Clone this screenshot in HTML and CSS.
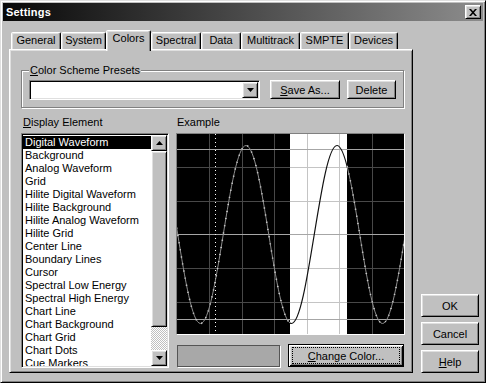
FILE: index.html
```html
<!DOCTYPE html>
<html lang="en">
<head>
    <meta charset="UTF-8">
    <title>Settings</title>
    <link rel="stylesheet" href="styles.css">
</head>
<body>
    <div class="window">
        <div class="titlebar">
            <span class="title">Settings</span>
            <button class="btn close-btn" aria-label="Close">
                <svg width="8" height="7" viewBox="0 0 8 7"><path d="M0 0h2l2 2.3L6 0h2L5 3.5 8 7H6L4 4.7 2 7H0l3-3.5z" fill="#000"/></svg>
            </button>
        </div>

        <div class="client">
            <div class="tab-area">
                <div class="tabs">
                    <div class="tab tab-general">General</div>
                    <div class="tab tab-system">System</div>
                    <div class="tab tab-colors active">Colors</div>
                    <div class="tab tab-spectral">Spectral</div>
                    <div class="tab tab-data">Data</div>
                    <div class="tab tab-multitrack">Multitrack</div>
                    <div class="tab tab-smpte">SMPTE</div>
                    <div class="tab tab-devices">Devices</div>
                </div>

                <div class="panel">
                    <fieldset class="presets">
                        <legend><u>C</u>olor Scheme Presets</legend>
                        <div class="preset-row">
                            <div class="combo">
                                <span class="btn combo-arrow">
                                    <svg width="7" height="4" viewBox="0 0 7 4"><path d="M0 0h7L3.5 4z" fill="#000"/></svg>
                                </span>
                            </div>
                            <button class="btn save-btn"><u>S</u>ave As...</button>
                            <button class="btn delete-btn">Delete</button>
                        </div>
                    </fieldset>

                    <div class="columns">
                        <div class="list-col">
                            <div class="field-label"><u>D</u>isplay Element</div>
                            <div class="listbox">
                                <ul class="items">
                                    <li class="selected">Digital Waveform</li>
                                    <li>Background</li>
                                    <li>Analog Waveform</li>
                                    <li>Grid</li>
                                    <li>Hilite Digital Waveform</li>
                                    <li>Hilite Background</li>
                                    <li>Hilite Analog Waveform</li>
                                    <li>Hilite Grid</li>
                                    <li>Center Line</li>
                                    <li>Boundary Lines</li>
                                    <li>Cursor</li>
                                    <li>Spectral Low Energy</li>
                                    <li>Spectral High Energy</li>
                                    <li>Chart Line</li>
                                    <li>Chart Background</li>
                                    <li>Chart Grid</li>
                                    <li>Chart Dots</li>
                                    <li>Cue Markers</li>
                                </ul>
                                <div class="scrollbar">
                                    <span class="btn sb-btn">
                                        <svg width="7" height="4" viewBox="0 0 7 4"><path d="M3.5 0L7 4H0z" fill="#000"/></svg>
                                    </span>
                                    <span class="btn sb-thumb"></span>
                                    <span class="sb-track"></span>
                                    <span class="btn sb-btn">
                                        <svg width="7" height="4" viewBox="0 0 7 4"><path d="M0 0h7L3.5 4z" fill="#000"/></svg>
                                    </span>
                                </div>
                            </div>
                        </div>

                        <div class="example-col">
                            <div class="field-label example-label">Example</div>
                            <div class="example">
                                <svg width="227" height="200" viewBox="0 0 227 200">
                                    <defs>
                                        <clipPath id="hilite"><rect x="113" y="0" width="57" height="200"/></clipPath>
                                        <clipPath id="normal">
                                            <rect x="0" y="0" width="113" height="200"/>
                                            <rect x="170" y="0" width="57" height="200"/>
                                        </clipPath>
                                        <path id="grid" d="M32.5 0V200M65.5 0V200M97.5 0V200M130.5 0V200M162.5 0V200M195.5 0V200M0 33.5H227M0 67.5H227M0 134.5H227M0 168.5H227"/>
                                        <path id="curve" d="M-22 11.5C-5.47 11.5 6.97 189.5 23.5 189.5S52.47 11.5 69 11.5S97.97 189.5 114.5 189.5S143.47 11.5 160 11.5S188.97 189.5 205.5 189.5S234.47 11.5 251 11.5"/>
                                    </defs>
                                    <rect width="227" height="200" fill="#000"/>
                                    <rect x="113" width="57" height="200" fill="#fff"/>
                                    <!-- grid: dark on black, light on hilite -->
                                    <use href="#grid" stroke="#484848" clip-path="url(#normal)"/>
                                    <use href="#grid" stroke="#c4c4c4" clip-path="url(#hilite)"/>
                                    <!-- boundary + center lines -->
                                    <path d="M0 15.5H227M0 100.5H227M0 185.5H227" stroke="#a6a6a6"/>
                                    <!-- cursor -->
                                    <path d="M38.5 0V200" stroke="#fff" stroke-dasharray="1 3"/>
                                    <!-- waveform -->
                                    <g clip-path="url(#normal)" fill="none">
                                        <use href="#curve" stroke="#8c8c8c"/>
                                        <use href="#curve" stroke="#c8c8c8" stroke-width="1.6" stroke-dasharray="1.2 6"/>
                                    </g>
                                    <g clip-path="url(#hilite)" fill="none">
                                        <use href="#curve" stroke="#111" stroke-width="1.2"/>
                                    </g>
                                </svg>
                            </div>
                            <div class="color-row">
                                <div class="swatch"></div>
                                <button class="btn default change-btn"><span class="focus"><u>C</u>hange Color...</span></button>
                            </div>
                        </div>
                    </div>
                </div>
            </div>

            <div class="actions">
                <button class="btn">OK</button>
                <button class="btn">Cancel</button>
                <button class="btn"><u>H</u>elp</button>
            </div>
        </div>
    </div>
</body>
</html>
```

FILE: styles.css
```css
body {
    margin: 0;
    background: #c0c0c0;
    color: #000;
    font-family: 'Liberation Sans', Arial, sans-serif;
    font-size: 11px;
}
.window {
    box-sizing: border-box;
    width: 486px;
    height: 383px;
    padding: 2px;
    background: #c0c0c0;
    border: 1px solid;
    border-color: #dfdfdf #000 #000 #dfdfdf;
    box-shadow: inset 1px 1px #fff, inset -1px -1px #808080;
}
.titlebar {
    display: flex;
    align-items: center;
    justify-content: space-between;
    height: 18px;
    padding: 0 2px 0 3px;
    background: linear-gradient(to right, #080808, #8c8c8c);
}
.title {
    color: #fff;
    font-weight: bold;
    font-size: 11px;
    letter-spacing: 0.2px;
}

/* win98 style bevel button */
.btn {
    box-sizing: border-box;
    display: flex;
    align-items: center;
    justify-content: center;
    padding: 0;
    margin: 0;
    font: 11px 'Liberation Sans', Arial, sans-serif;
    color: #000;
    background: #c0c0c0;
    border: 1px solid;
    border-color: #fff #000 #000 #fff;
    box-shadow: inset 1px 1px #dfdfdf, inset -1px -1px #808080;
}
.btn u, .field-label u, legend u {
    text-underline-offset: 1px;
}
.close-btn {
    width: 16px;
    height: 14px;
}

.client {
    display: flex;
    padding: 9px 0 0 6px;
}
.tab-area {
    width: 404px;
}
.tabs {
    display: flex;
    align-items: flex-end;
    height: 19px;
    padding-left: 2px;
}
.tab {
    box-sizing: border-box;
    height: 17px;
    line-height: 15px;
    text-align: center;
    border: 1px solid;
    border-bottom: 0;
    border-color: #fff #000 transparent #fff;
    border-radius: 2px 2px 0 0;
    box-shadow: inset -1px 0 #808080, inset 1px 1px #dfdfdf;
    background: #c0c0c0;
}
.tab.active {
    position: relative;
    z-index: 1;
    height: 21px;
    margin-bottom: -2px;
}
.tab-general { width: 50px; }
.tab-system { width: 45px; }
.tab-colors { width: 45px; }
.tab-spectral { width: 50px; }
.tab-data { width: 40px; }
.tab-multitrack { width: 59px; }
.tab-smpte { width: 49px; }
.tab-devices { width: 49px; }

.panel {
    box-sizing: border-box;
    width: 404px;
    height: 324px;
    padding: 14px 7px 0 11px;
    border: 1px solid;
    border-color: #fff #000 #000 #fff;
    box-shadow: inset 1px 1px #dfdfdf, inset -1px -1px #808080;
}

.presets {
    box-sizing: border-box;
    width: 383px;
    min-inline-size: 0;
    margin: 0;
    padding: 3px 7px 7px;
    border: 1px solid #808080;
    box-shadow: inset 1px 1px #fff, 1px 1px #fff;
}
.presets legend {
    padding: 0 1px;
    margin-left: 0;
    line-height: 13px;
    background: #c0c0c0;
}
.preset-row {
    display: flex;
    align-items: flex-start;
}
.combo {
    box-sizing: border-box;
    display: flex;
    justify-content: flex-end;
    width: 231px;
    height: 20px;
    padding: 1px;
    margin-right: 10px;
    background: #fff;
    border: 1px solid;
    border-color: #808080 #fff #fff #808080;
    box-shadow: inset 1px 1px #000, inset -1px -1px #dfdfdf;
}
.combo-arrow {
    width: 16px;
    height: 16px;
}
.save-btn {
    width: 70px;
    height: 19px;
    margin-right: 7px;
}
.delete-btn {
    width: 49px;
    height: 19px;
}

.columns {
    display: flex;
    margin-top: 8px;
}
.list-col {
    width: 148px;
}
.example-col {
    width: 229px;
    margin-left: 7px;
}
.field-label {
    line-height: 13px;
    padding-left: 2px;
    margin-bottom: 4px;
}
.example-label {
    padding-left: 1px;
}

.listbox {
    box-sizing: border-box;
    display: flex;
    height: 235px;
    padding: 1px;
    background: #fff;
    border: 1px solid;
    border-color: #808080 #fff #fff #808080;
    box-shadow: inset 1px 1px #000, inset -1px -1px #dfdfdf;
}
.items {
    flex: 1;
    overflow: hidden;
    list-style: none;
    margin: 0;
    padding: 1px 0 0;
}
.items li {
    height: 13px;
    line-height: 13px;
    padding-left: 2px;
    white-space: nowrap;
}
.items li.selected {
    background: #000;
    color: #fff;
}
.scrollbar {
    display: flex;
    flex-direction: column;
    width: 16px;
}
.sb-btn {
    width: 16px;
    height: 16px;
    flex: none;
}
.sb-thumb {
    height: 176px;
    flex: none;
}
.sb-track {
    flex: 1;
    background: repeating-conic-gradient(#fff 0 25%, #c0c0c0 0 50%) 0 0 / 2px 2px;
}

.example {
    box-sizing: border-box;
    height: 202px;
    background: #000;
    border: 1px solid;
    border-color: #808080 #fff #fff #808080;
}
.example svg {
    display: block;
}
.color-row {
    display: flex;
    margin-top: 9px;
}
.swatch {
    box-sizing: border-box;
    width: 103px;
    height: 22px;
    margin: 1px 0 0 1px;
    background: #a8a8a8;
    border: 1px solid #555;
    box-shadow: 1px 1px #fff;
}
.change-btn {
    width: 116px;
    height: 23px;
    margin-left: 8px;
}
.btn.default {
    padding: 2px 3px;
    border-color: #000;
    box-shadow: inset 1px 1px #fff, inset -1px -1px #000, inset 2px 2px #dfdfdf, inset -2px -2px #808080;
}
.focus {
    flex: 1;
    align-self: stretch;
    display: flex;
    align-items: center;
    justify-content: center;
    border: 1px dotted #000;
}

.actions {
    display: flex;
    flex-direction: column;
    gap: 5px;
    align-self: flex-end;
    margin-left: 8px;
}
.actions .btn {
    width: 58px;
    height: 23px;
}
```
